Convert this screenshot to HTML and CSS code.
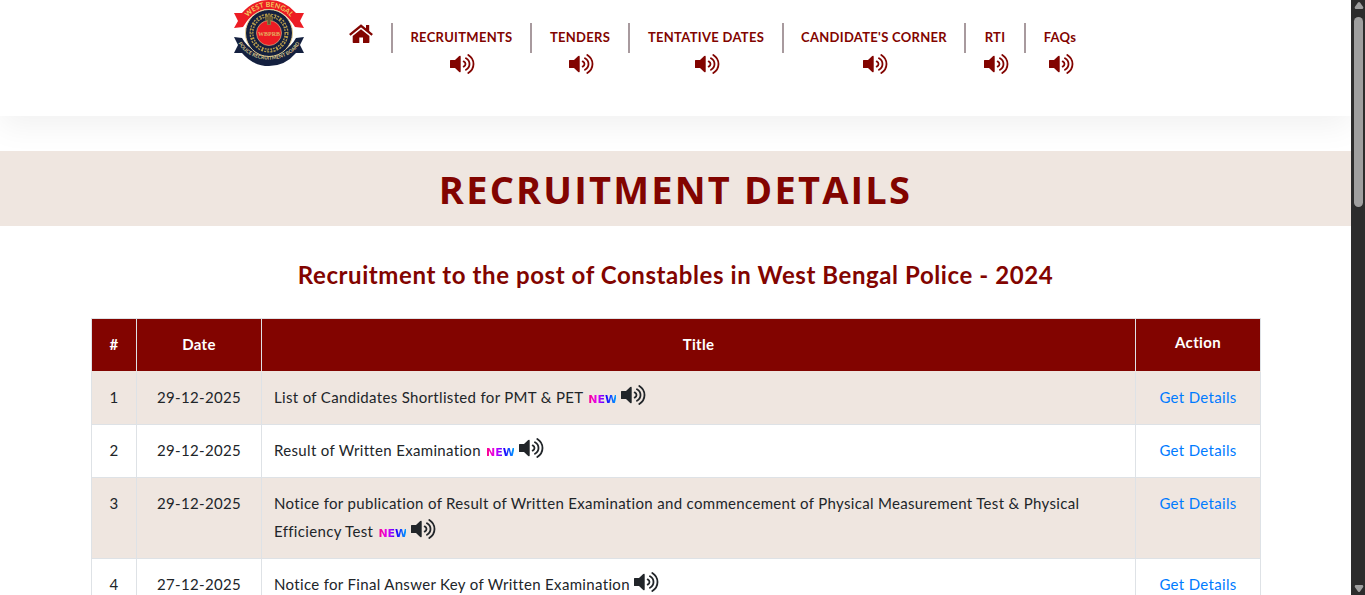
FILE: index.html
```
<!DOCTYPE html>
<html lang="en">
<head>
    <meta charset="UTF-8">
    <title>West Bengal Police Recruitment Board</title>
    <link rel="stylesheet" href="styles.css">
</head>
<body>
    <svg width="0" height="0" class="symbols">
        <symbol id="speaker" viewBox="0 0 25 20">
            <path d="M0.6 6H5L9.2 2.1Q10.7 1 10.7 2.7V17.3Q10.7 19 9.2 17.9L5 14H0.6Q0 14 0 13.4V6.6Q0 6 .6 6Z" fill="currentColor"/>
            <path d="M13.7 7.4Q15.5 8.3 15.5 10T13.7 12.6M16 4.3Q19.5 6.2 19.5 10T16 15.7M18.3 1Q23.5 4.3 23.5 10T18.3 19" fill="none" stroke="currentColor" stroke-width="1.8" stroke-linecap="round"/>
        </symbol>
    </svg>

    <div class="page">
        <header class="header">
            <a href="#" class="logo">
                <svg width="72" height="68" viewBox="0 0 72 68">
                    <defs>
                        <path id="arc-top" d="M10 26A27 26 0 0 1 62 26"/>
                        <path id="arc-bottom" d="M4 40A33 26 0 0 0 68 40"/>
                    </defs>
                    <path d="M1 37L9 38Q18 54 36 54T63 38L71 37L67 45L71 53L63 53Q52 66 36 66T9 53L1 53L5 45Z" fill="#14203f"/>
                    <path d="M1 13L9 13Q20 0 36 0T63 13L71 13L67 21L71 28L62 27Q51 9 36 9T10 27L1 28L5 21Z" fill="#ed1c24"/>
                    <circle cx="36" cy="33" r="23.5" fill="#14203f" stroke="#e5cc90" stroke-width="1"/>
                    <circle cx="36" cy="33" r="17.5" fill="none" stroke="#b59a4c" stroke-width="4" stroke-dasharray="2 1"/>
                    <circle cx="36" cy="33" r="17.5" fill="none" stroke="#14203f" stroke-width="1.4" stroke-dasharray="3 2"/>
                    <circle cx="36" cy="33" r="12.5" fill="#ed1c24" stroke="#e5cc90" stroke-width=".6"/>
                    <path d="M32 17Q36 11 40 17L39.5 21H38V25H34V21H32.5Z" fill="#8a793f"/>
                    <path d="M34 17V20M38 17V20M36 15V24" stroke="#2b2a30" stroke-width=".8"/>
                    <text x="36" y="36" class="logo-mid">WBPRB</text>
                    <text class="logo-arc"><textPath href="#arc-top" startOffset="50%">WEST BENGAL</textPath></text>
                    <text class="logo-arc small"><textPath href="#arc-bottom" startOffset="50%">POLICE RECRUITMENT BOARD</textPath></text>
                </svg>
            </a>
            <nav class="nav">
                <a href="#" class="home">
                    <svg width="24" height="20" viewBox="0 0 24 20">
                        <path d="M.8 10.8L12 1.8L23.2 10.8" fill="none" stroke="currentColor" stroke-width="2.3"/>
                        <path d="M17 1H20.2V8.5L17 6ZM12 5.2L20.4 11.9V18.3Q20.4 19 19.7 19H14V13.5H10.3V19H4.4Q3.7 19 3.7 18.3V11.9Z" fill="currentColor"/>
                    </svg>
                </a>
                <div class="nav-item"><a href="#">RECRUITMENTS</a><svg class="speaker"><use href="#speaker"/></svg></div>
                <div class="nav-item"><a href="#">TENDERS</a><svg class="speaker"><use href="#speaker"/></svg></div>
                <div class="nav-item"><a href="#">TENTATIVE DATES</a><svg class="speaker"><use href="#speaker"/></svg></div>
                <div class="nav-item"><a href="#">CANDIDATE'S CORNER</a><svg class="speaker"><use href="#speaker"/></svg></div>
                <div class="nav-item"><a href="#">RTI</a><svg class="speaker"><use href="#speaker"/></svg></div>
                <div class="nav-item"><a href="#">FAQs</a><svg class="speaker"><use href="#speaker"/></svg></div>
            </nav>
        </header>

        <h1 class="banner">RECRUITMENT DETAILS</h1>
        <h2 class="post-title">Recruitment to the post of Constables in West Bengal Police - 2024</h2>

        <table class="notices">
            <colgroup>
                <col class="col-no">
                <col class="col-date">
                <col>
                <col class="col-action">
            </colgroup>
            <thead>
                <tr>
                    <th>#</th>
                    <th>Date</th>
                    <th>Title</th>
                    <th class="action">Action</th>
                </tr>
            </thead>
            <tbody>
                <tr>
                    <td>1</td>
                    <td>29-12-2025</td>
                    <td class="title">List of Candidates Shortlisted for PMT &amp; PET <span class="new">NEW</span><svg class="speaker"><use href="#speaker"/></svg></td>
                    <td><a href="#">Get Details</a></td>
                </tr>
                <tr>
                    <td>2</td>
                    <td>29-12-2025</td>
                    <td class="title">Result of Written Examination <span class="new">NEW</span><svg class="speaker"><use href="#speaker"/></svg></td>
                    <td><a href="#">Get Details</a></td>
                </tr>
                <tr>
                    <td>3</td>
                    <td>29-12-2025</td>
                    <td class="title">Notice for publication of Result of Written Examination and commencement of Physical Measurement Test &amp; Physical<br>Efficiency Test <span class="new">NEW</span><svg class="speaker"><use href="#speaker"/></svg></td>
                    <td><a href="#">Get Details</a></td>
                </tr>
                <tr>
                    <td>4</td>
                    <td>27-12-2025</td>
                    <td class="title">Notice for Final Answer Key of Written Examination<svg class="speaker"><use href="#speaker"/></svg></td>
                    <td><a href="#">Get Details</a></td>
                </tr>
            </tbody>
        </table>
    </div>

    <div class="scrollbar">
        <svg width="10" height="7" viewBox="0 0 10 7"><path d="M4 .6Q5 -.4 6 .6L9.2 5Q9.6 7 8 7H2Q.4 7 .8 5Z" fill="#9f9f9f"/></svg>
        <div class="thumb"></div>
        <svg class="down" width="10" height="7" viewBox="0 0 10 7"><path d="M4 6.4Q5 7.4 6 6.4L9.2 2Q9.6 0 8 0H2Q.4 0 .8 2Z" fill="#9f9f9f"/></svg>
    </div>
</body>
</html>
```
FILE: styles.css
```
* {
    box-sizing: border-box;
}
body {
    margin: 0;
    height: 595px;
    display: flex;
    overflow: hidden;
    background: #fff;
    color: #212529;
    font-family: Lato, "Noto Sans", sans-serif;
    font-size: 15px;
}
a {
    color: #007bff;
    text-decoration: none;
}
.symbols {
    display: none;
}
.page {
    flex: 1;
    height: 595px;
    overflow: hidden;
}
.header {
    display: flex;
    height: 116px;
    padding-left: 233px;
    box-shadow: 0 10px 30px rgba(0,0,0,0.06);
}
.logo {
    width: 98px;
}
.logo svg {
    display: block;
}
.logo-mid {
    font: bold 6px "Liberation Serif", serif;
    fill: #e5b060;
    text-anchor: middle;
}
.logo-arc {
    font: bold 7px Lato, sans-serif;
    fill: #f3c95c;
    text-anchor: middle;
}
.logo-arc.small {
    font-size: 5px;
    fill: #d8c58c;
}
.nav {
    display: grid;
    grid-template-columns: 60px 139px 98px 154px 182px 60px 70px;
    padding-top: 23px;
    color: #820400;
}
.home {
    color: #820400;
    text-align: center;
    padding-top: 1px;
}
.nav-item {
    display: flex;
    flex-direction: column;
    align-items: center;
}
.nav-item a {
    width: 100%;
    height: 30px;
    line-height: 29px;
    border-left: 2px solid #a89a9e;
    text-align: center;
    color: #820400;
    font-size: 13px;
    font-weight: 700;
    letter-spacing: 0.3px;
    white-space: nowrap;
}
.speaker {
    width: 25px;
    height: 20px;
}
.nav-item .speaker {
    margin: 1px 0 0 4px;
}
.banner {
    margin: 35px 0 0;
    height: 75px;
    line-height: 76px;
    background: #efe6e0;
    color: #820400;
    font-family: "Open Sans", sans-serif;
    font-size: 38px;
    font-weight: 700;
    letter-spacing: 2.2px;
    text-align: center;
}
.post-title {
    margin: 32px 0 26px;
    line-height: 34px;
    color: #820400;
    font-size: 24px;
    font-weight: 700;
    letter-spacing: 0.58px;
    text-align: center;
}
.notices {
    width: 1170px;
    margin-left: 91px;
    table-layout: fixed;
    border-collapse: collapse;
    line-height: 28px;
    letter-spacing: 0.33px;
}
.col-no {
    width: 45px;
}
.col-date,
.col-action {
    width: 125px;
}
.notices th,
.notices td {
    border: 1px solid #dee2e6;
    padding: 11px 0 13px;
    text-align: center;
    vertical-align: top;
}
.notices th {
    height: 53px;
    border-bottom-color: #efe6e0;
    background: #820400;
    color: #fff;
    font-weight: 700;
}
.notices th.action {
    padding-top: 9px;
}
.notices tbody tr:nth-child(odd) {
    background: #efe6e0;
}
.notices td.title {
    padding-left: 12px;
    text-align: left;
    white-space: nowrap;
}
.title .speaker {
    margin: 0 0 0 4px;
    vertical-align: -2px;
}
.new {
    display: inline-block;
    width: 28px;
    height: 12px;
    line-height: 12px;
    margin: 0 1px;
    vertical-align: 0;
    background: linear-gradient(90deg, #ff0080, #e000ff 35%, #2000ff 65%, #00a0ff);
    background-clip: text;
    -webkit-background-clip: text;
    color: transparent;
    font-family: "DejaVu Sans", sans-serif;
    font-size: 11px;
    font-weight: 700;
    letter-spacing: 0;
}
.scrollbar {
    display: flex;
    flex-direction: column;
    align-items: center;
    width: 14px;
    height: 595px;
    padding: 2px 0 3px 1px;
    background: #2c2c2c;
}
.thumb {
    width: 9px;
    height: 190px;
    margin-top: 8px;
    border-radius: 5px;
    background: #9f9f9f;
}
.down {
    margin-top: auto;
}
```
